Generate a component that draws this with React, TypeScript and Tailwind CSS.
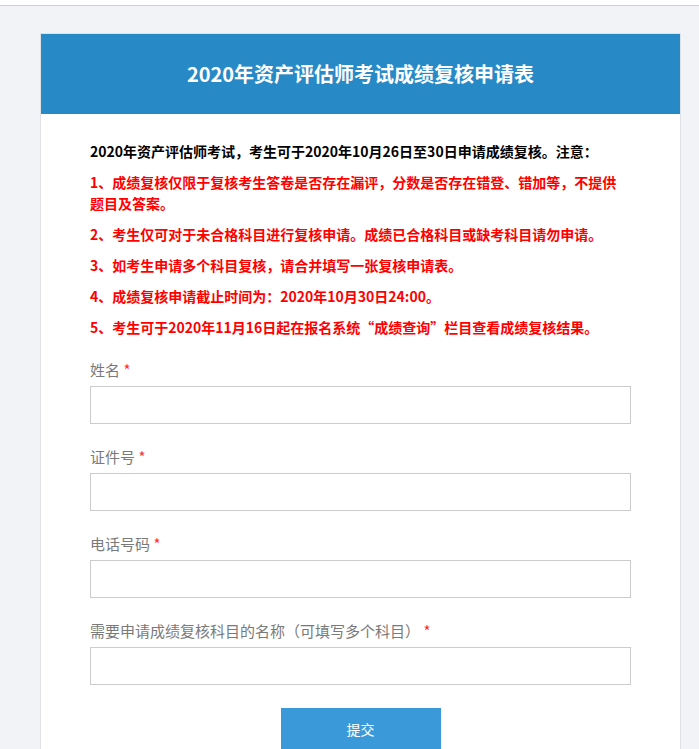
const fields = [
  "姓名",
  "证件号",
  "电话号码",
  "需要申请成绩复核科目的名称（可填写多个科目）",
];

const notes = [
  "1、成绩复核仅限于复核考生答卷是否存在漏评，分数是否存在错登、错加等，不提供题目及答案。",
  "2、考生仅可对于未合格科目进行复核申请。成绩已合格科目或缺考科目请勿申请。",
  "3、如考生申请多个科目复核，请合并填写一张复核申请表。",
  "4、成绩复核申请截止时间为：2020年10月30日24:00。",
  "5、考生可于2020年11月16日起在报名系统“成绩查询”栏目查看成绩复核结果。",
];

export default function App() {
  return (
    <div className="min-h-screen bg-[#f2f3f7] font-['Noto_Sans_CJK_SC','Noto_Sans',sans-serif]">
      <div className="h-[6px] bg-white border-b border-[#cfd0d6]" />
      <div className="ml-[40px] mt-[27px] w-[641px] bg-white border border-[#dfe1e6]">
        <div className="h-[80px] bg-[#2789c6] flex items-center justify-center text-white text-[20px] font-bold">
          2020年资产评估师考试成绩复核申请表
        </div>
        <div className="px-[49px] pt-[27px] pb-10">
          <p className="text-[14px] leading-[21px] font-bold text-black mb-[10px]">
            2020年资产评估师考试，考生可于2020年10月26日至30日申请成绩复核。注意：
          </p>
          {notes.map((n) => (
            <p key={n} className="text-[14px] leading-[21px] font-bold text-[#ff0000] mb-[10px] pr-[14px]">
              {n}
            </p>
          ))}
          <form className="pt-[12px]" onSubmit={(e) => e.preventDefault()}>
            {fields.map((f) => (
              <div key={f} className="mb-[23px]">
                <label className="block text-[15px] leading-[20px] text-[#7a7a7a] mb-[6px]">
                  {f} <span className="text-[#ff3030]">*</span>
                </label>
                <input
                  type="text"
                  className="block w-full h-[38px] border border-[#cccccc] bg-white outline-none px-2 text-sm"
                />
              </div>
            ))}
            <div className="flex justify-center">
              <button
                type="submit"
                className="w-[160px] h-[42px] bg-[#3a9ad9] text-white text-[14px]"
              >
                提交
              </button>
            </div>
          </form>
        </div>
      </div>
    </div>
  );
}
